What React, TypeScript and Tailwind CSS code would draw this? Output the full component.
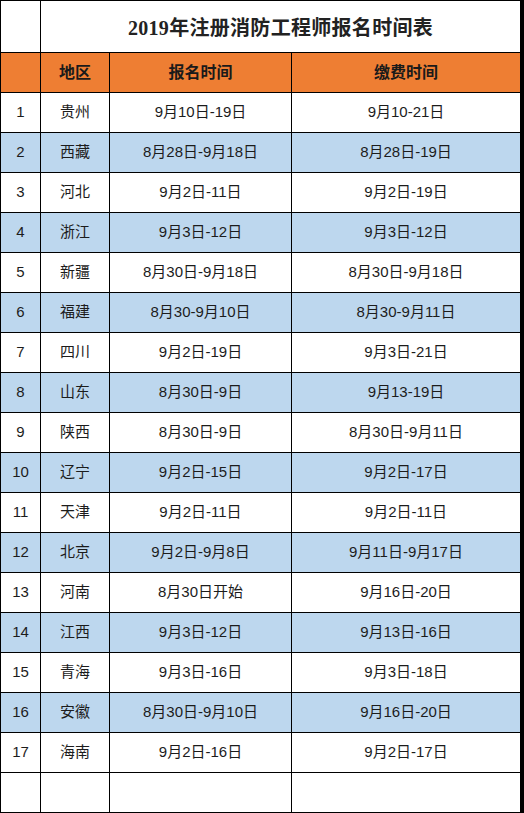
import clsx from 'clsx';

type Row = {
  no: number;
  region: string;
  signup: string;
  payment: string;
};

const rows: Row[] = [
  { no: 1, region: '贵州', signup: '9月10日-19日', payment: '9月10-21日' },
  { no: 2, region: '西藏', signup: '8月28日-9月18日', payment: '8月28日-19日' },
  { no: 3, region: '河北', signup: '9月2日-11日', payment: '9月2日-19日' },
  { no: 4, region: '浙江', signup: '9月3日-12日', payment: '9月3日-12日' },
  { no: 5, region: '新疆', signup: '8月30日-9月18日', payment: '8月30日-9月18日' },
  { no: 6, region: '福建', signup: '8月30-9月10日', payment: '8月30-9月11日' },
  { no: 7, region: '四川', signup: '9月2日-19日', payment: '9月3日-21日' },
  { no: 8, region: '山东', signup: '8月30日-9日', payment: '9月13-19日' },
  { no: 9, region: '陕西', signup: '8月30日-9日', payment: '8月30日-9月11日' },
  { no: 10, region: '辽宁', signup: '9月2日-15日', payment: '9月2日-17日' },
  { no: 11, region: '天津', signup: '9月2日-11日', payment: '9月2日-11日' },
  { no: 12, region: '北京', signup: '9月2日-9月8日', payment: '9月11日-9月17日' },
  { no: 13, region: '河南', signup: '8月30日开始', payment: '9月16日-20日' },
  { no: 14, region: '江西', signup: '9月3日-12日', payment: '9月13日-16日' },
  { no: 15, region: '青海', signup: '9月3日-16日', payment: '9月3日-18日' },
  { no: 16, region: '安徽', signup: '8月30日-9月10日', payment: '9月16日-20日' },
  { no: 17, region: '海南', signup: '9月2日-16日', payment: '9月2日-17日' },
];

const rowGrid = 'grid grid-cols-[40px_69px_182px_228px] border-b border-black';
const cell = 'flex items-center justify-center border-r border-black';

export default function App() {
  return (
    <div className="w-[524px] h-[813px] bg-white">
      <div
        className="w-[524px] border-l border-t border-r-4 border-black text-[#1c1c1c]"
        style={{ fontFamily: "'Liberation Sans', 'Noto Sans CJK SC', sans-serif" }}
      >
        {/* title */}
        <div className={clsx(rowGrid, 'h-[52px]')}>
          <div className={cell} />
          <div
            className="col-span-3 flex items-center justify-center pt-[2px] text-[20px] font-bold tracking-[0.3px] text-[#222]"
            style={{ fontFamily: "'Liberation Serif', 'Noto Sans CJK SC', serif" }}
          >
            2019年注册消防工程师报名时间表
          </div>
        </div>

        {/* header */}
        <div className={clsx(rowGrid, 'h-[40px] bg-[#ee7e33] text-[16px] font-bold text-[#1a1a1a]')}>
          <div className={cell} />
          <div className={cell}>地区</div>
          <div className={cell}>报名时间</div>
          <div className="flex items-center justify-center">缴费时间</div>
        </div>

        {rows.map((row) => (
          <div
            key={row.no}
            className={clsx(rowGrid, 'h-[40px] text-[15px]', row.no % 2 === 0 ? 'bg-[#bdd7ee]' : 'bg-white')}
          >
            <div className={cell}>{row.no}</div>
            <div className={cell}>{row.region}</div>
            <div className={cell}>{row.signup}</div>
            <div className="flex items-center justify-center">{row.payment}</div>
          </div>
        ))}

        {/* trailing empty row */}
        <div className={clsx(rowGrid, 'h-[40px]')}>
          <div className={cell} />
          <div className={cell} />
          <div className={cell} />
          <div />
        </div>
      </div>
    </div>
  );
}
